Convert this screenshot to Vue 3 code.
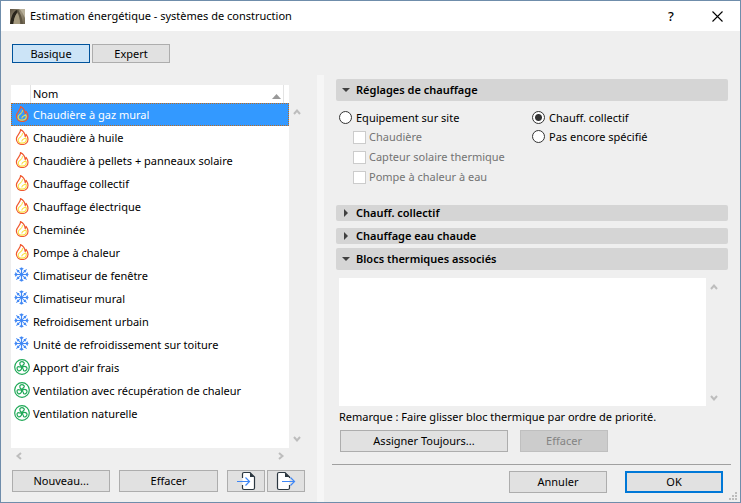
<script setup>
import { ref } from 'vue'

const systems = [
  { name: 'Chaudière à gaz mural', kind: 'flame' },
  { name: 'Chaudière à huile', kind: 'flame' },
  { name: 'Chaudière à pellets + panneaux solaire', kind: 'flame' },
  { name: 'Chauffage collectif', kind: 'flame' },
  { name: 'Chauffage électrique', kind: 'flame' },
  { name: 'Cheminée', kind: 'flame' },
  { name: 'Pompe à chaleur', kind: 'flame' },
  { name: 'Climatiseur de fenêtre', kind: 'snow' },
  { name: 'Climatiseur mural', kind: 'snow' },
  { name: 'Refroidisement urbain', kind: 'snow' },
  { name: 'Unité de refroidissement sur toiture', kind: 'snow' },
  { name: "Apport d'air frais", kind: 'fan' },
  { name: 'Ventilation avec récupération de chaleur', kind: 'fan' },
  { name: 'Ventilation naturelle', kind: 'fan' }
]
const equipment = ['Chaudière', 'Capteur solaire thermique', 'Pompe à chaleur à eau']
const straight = [0, 90, 180, 270]
const diagonal = [45, 135, 225, 315]
const blades = [0, 120, 240]

const selected = ref(0)
const mode = ref('basic')
const source = ref('district')
</script>

<template>
  <div class="window">
    <header class="titlebar">
      <svg class="logo" viewBox="0 0 15 15" aria-hidden="true">
        <defs>
          <linearGradient id="logo-bg" x1="0" y1="0" x2="1" y2="1">
            <stop offset="0" stop-color="#5a503f" />
            <stop offset="0.5" stop-color="#9b927c" />
            <stop offset="1" stop-color="#6a604b" />
          </linearGradient>
        </defs>
        <rect width="15" height="15" fill="url(#logo-bg)" />
        <path d="M9 0H15V9C13 5 12 2 9 0Z" fill="#b9b19b" />
        <path d="M0 15C1 8 3 2 7 1L9 2C6 4 4 9 3.500 15Z" fill="#2a251c" />
        <path d="M3.500 15C4 9 6 5 8 3.500C9 7 10 11 10 15Z" fill="#a59a7f" />
        <path d="M7 1C10 2 12 8 13 15H10.500C10 10 9 6 7.500 4Z" fill="#5f5643" />
      </svg>
      <h1 class="title">Estimation énergétique - systèmes de construction</h1>
      <button class="caption help" type="button" aria-label="Aide">?</button>
      <button class="caption" type="button" aria-label="Fermer">
        <svg width="11" height="11" viewBox="0 0 11 11"><path d="M.5 .5L10.5 10.5M10.5 .5L.5 10.5" fill="none" stroke="#000" stroke-width="1.1" /></svg>
      </button>
    </header>

    <nav class="tabs">
      <button type="button" class="btn tab" :class="{ on: mode === 'basic' }" @click="mode = 'basic'">Basique</button>
      <button type="button" class="btn tab" :class="{ on: mode === 'expert' }" @click="mode = 'expert'">Expert</button>
    </nav>

    <main class="panes">
      <section class="left">
        <div class="listbox">
          <div class="list">
            <table class="systems">
              <thead>
                <tr>
                  <th class="icon-head"></th>
                  <th class="name-head">
                    <span class="head-cell">Nom
                      <svg width="9" height="5" viewBox="0 0 9 5" aria-hidden="true"><path d="M0 5L4.500 0L9 5Z" fill="#999" /></svg>
                    </span>
                  </th>
                </tr>
              </thead>
              <tbody>
                <tr v-for="(s, i) in systems" :key="s.name" :class="{ selected: i === selected }" @click="selected = i">
                  <td class="icon-cell">
                    <svg v-if="s.kind === 'flame'" class="icon" viewBox="0 0 16 16" aria-hidden="true">
                      <path d="M6.500 .6C7.200 4 2.400 6 2.400 10.100C2.400 13.400 5 15.500 8.200 15.500C11.500 15.500 14 13.300 14 10.200C14 8.300 13.200 6.900 12.200 5.500C12.100 6.500 11.700 7.100 11.200 7.400C10.900 4.200 9.300 1.900 6.500 .6Z" fill="none" stroke="#f0592f" stroke-width="1.200" stroke-linejoin="round" />
                      <path d="M8.400 4.500C9.300 7.600 4.100 8.300 4.100 11C4.100 13 6 14.100 8.200 14.100C10.500 14.100 12.300 12.600 12.300 10.600C12.300 9.900 12.100 9.300 11.700 8.800C10.500 10 8 9.500 7.900 12" fill="none" stroke="#fbe03b" stroke-width="1.100" stroke-linecap="round" stroke-linejoin="round" />
                    </svg>
                    <svg v-else-if="s.kind === 'snow'" class="icon" viewBox="0 0 16 16" aria-hidden="true">
                      <g fill="none" stroke="#3f87f5" stroke-width="1.200">
                        <path v-for="a in straight" :key="a" :transform="`rotate(${a} 7.500 7.500)`" d="M7.500 7.500V.5M5.800 1.200L7.500 3L9.200 1.200" />
                        <path v-for="a in diagonal" :key="a" :transform="`rotate(${a} 7.500 7.500)`" d="M7.500 7.500V.3M6.200 2.300L7.500 3.600L8.800 2.300" stroke-width="1" />
                      </g>
                    </svg>
                    <svg v-else class="icon" viewBox="0 0 16 16" aria-hidden="true">
                      <g fill="none" stroke="#1ea856" stroke-width="1.200">
                        <circle cx="8" cy="8" r="7.300" />
                        <circle cx="8" cy="8" r=".8" />
                        <path v-for="a in blades" :key="a" :transform="`rotate(${a} 8 8)`" d="M7.400 7.300C5.700 6.200 5.300 3.900 6.600 3C8 2.200 10.400 3 10.300 4.500C10.200 5.500 8.800 5.600 8.600 7.300" />
                      </g>
                    </svg>
                  </td>
                  <td>{{ s.name }}</td>
                </tr>
              </tbody>
            </table>
          </div>
          <div class="vscroll">
            <svg class="chev" viewBox="0 0 8 8"><path d="M1 6L4 2.500L7 6" /></svg>
            <svg class="chev" viewBox="0 0 8 8"><path d="M1 2L4 5.500L7 2" /></svg>
          </div>
          <div class="hscroll">
            <svg class="chev" viewBox="0 0 8 8"><path d="M6 1L2.500 4L6 7" /></svg>
            <svg class="chev" viewBox="0 0 8 8"><path d="M2 1L5.500 4L2 7" /></svg>
          </div>
        </div>
        <div class="list-actions">
          <button type="button" class="btn">Nouveau...</button>
          <button type="button" class="btn">Effacer</button>
          <span class="io">
            <button type="button" class="btn" aria-label="Importer">
              <svg width="20" height="20" viewBox="0 0 20 20">
                <path d="M6.500 7V3Q6.500 1.500 8 1.500H14L18.500 6V17Q18.500 18.500 17 18.500H8Q6.500 18.500 6.500 17V14" fill="#fff" stroke="#2b3740" stroke-width="1.200" />
                <path d="M14 1.500V6H18.500Z" fill="#2b3740" />
                <path d="M1 10.500H13M9.500 6.500L13.500 10.500L9.500 14.500" fill="none" stroke="#3f87f5" stroke-width="1.200" />
              </svg>
            </button>
            <button type="button" class="btn" aria-label="Exporter">
              <svg width="20" height="20" viewBox="0 0 20 20">
                <path d="M13.500 7V6L9 1.500H3Q1.500 1.500 1.500 3V17Q1.500 18.500 3 18.500H12Q13.500 18.500 13.500 17V14" fill="#fff" stroke="#2b3740" stroke-width="1.200" />
                <path d="M9 1.500V6H13.500Z" fill="#2b3740" />
                <path d="M6 10.500H18M14.500 6.500L18.500 10.500L14.500 14.500" fill="none" stroke="#3f87f5" stroke-width="1.200" />
              </svg>
            </button>
          </span>
        </div>
      </section>

      <div class="splitter"></div>

      <section class="right">
        <h2 class="bar tall"><svg class="tri" viewBox="0 0 8 8"><path d="M0 2H8L4 6Z" /></svg>Réglages de chauffage</h2>
        <div class="heating">
          <div class="col">
            <label class="opt"><input v-model="source" type="radio" name="source" value="site">Equipement sur site</label>
            <label v-for="e in equipment" :key="e" class="opt sub"><input type="checkbox" disabled>{{ e }}</label>
          </div>
          <div class="col">
            <label class="opt"><input v-model="source" type="radio" name="source" value="district">Chauff. collectif</label>
            <label class="opt"><input v-model="source" type="radio" name="source" value="none">Pas encore spécifié</label>
          </div>
        </div>
        <h2 class="bar"><svg class="tri" viewBox="0 0 8 8"><path d="M2 0V8L6 4Z" /></svg>Chauff. collectif</h2>
        <h2 class="bar second"><svg class="tri" viewBox="0 0 8 8"><path d="M2 0V8L6 4Z" /></svg>Chauffage eau chaude</h2>
        <h2 class="bar tall third"><svg class="tri" viewBox="0 0 8 8"><path d="M0 2H8L4 6Z" /></svg>Blocs thermiques associés</h2>
        <div class="blocks">
          <div class="blocks-list"></div>
          <div class="vscroll">
            <svg class="chev" viewBox="0 0 8 8"><path d="M1 6L4 2.500L7 6" /></svg>
            <svg class="chev" viewBox="0 0 8 8"><path d="M1 2L4 5.500L7 2" /></svg>
          </div>
        </div>
        <p class="note">Remarque : Faire glisser bloc thermique par ordre de priorité.</p>
        <div class="assign">
          <button type="button" class="btn wide">Assigner Toujours...</button>
          <button type="button" class="btn clear" disabled>Effacer</button>
        </div>
        <footer class="footer">
          <button type="button" class="btn">Annuler</button>
          <button type="button" class="btn ok">OK</button>
        </footer>
      </section>
    </main>
    <svg class="grip" viewBox="0 0 8 8" aria-hidden="true">
      <path d="M6 0h2v2H6zM3 3h2v2H3zM6 3h2v2H6zM0 6h2v2H0zM3 6h2v2H3zM6 6h2v2H6z" fill="#bdbdbd" />
    </svg>
  </div>
</template>

<style>
body {
  margin: 0;
}
</style>

<style scoped>
.window {
  position: relative;
  display: flex;
  flex-direction: column;
  box-sizing: border-box;
  min-height: 100vh;
  border: 1px solid #6f8dab;
  background: #efefef;
  color: #000;
  font: 11px/16px "Noto Sans", "Open Sans", sans-serif;
}
.titlebar {
  display: flex;
  align-items: center;
  height: 30px;
  padding-left: 9px;
  background: #fff;
}
.logo {
  width: 15px;
  height: 15px;
}
.title {
  flex: 1;
  margin: 0 0 0 5px;
  font-size: 11px;
  font-weight: 400;
}
.caption {
  display: flex;
  align-items: center;
  justify-content: center;
  width: 46px;
  height: 30px;
  padding: 0;
  border: 0;
  background: none;
  color: #000;
  font: inherit;
}
.help {
  font-size: 13px;
  font-weight: 500;
}
.tabs {
  display: flex;
  gap: 2px;
  padding: 13px 11px 12px;
}
.btn {
  display: flex;
  align-items: center;
  justify-content: center;
  box-sizing: border-box;
  height: 22px;
  padding: 0;
  border: 1px solid #adadad;
  border-radius: 0;
  background: #e1e1e1;
  color: #000;
  font: inherit;
}
.tab {
  width: 78px;
  height: 19px;
}
.tab.on {
  border-color: #00539c;
  background: #cce4f7;
}
.panes {
  flex: 1;
  display: grid;
  grid-template-columns: minmax(0, 316fr) 7px minmax(0, 416fr);
}
.left {
  display: flex;
  flex-direction: column;
  padding: 10px 12px 10px 10px;
}
.listbox {
  flex: 1;
  display: grid;
  grid-template-columns: minmax(0, 1fr) 16px;
  grid-template-rows: minmax(0, 1fr) 15px;
}
.list {
  background: #fff;
}
.systems {
  width: 100%;
  border-collapse: separate;
  border-spacing: 0;
  table-layout: fixed;
}
.systems th {
  height: 18px;
  padding: 0;
  font-weight: 400;
  text-align: left;
}
.icon-head {
  width: 19px;
}
.systems .name-head {
  padding-right: 5px;
}
.head-cell {
  display: flex;
  align-items: center;
  justify-content: space-between;
  height: 18px;
  padding: 0 2px;
  border: solid #e3e3e3;
  border-width: 0 1px;
}
.head-cell svg {
  align-self: flex-end;
  margin-bottom: 4px;
}
.systems td {
  box-sizing: border-box;
  height: 23px;
  padding: 0 0 0 3px;
  white-space: nowrap;
}
.systems .icon-cell {
  padding-bottom: 2px;
}
.icon {
  display: block;
  width: 16px;
  height: 16px;
}
.selected {
  outline: 1px dotted #c06a1c;
  outline-offset: -1px;
  background: #3399ff;
  color: #fff;
}
.vscroll {
  display: flex;
  flex-direction: column;
  justify-content: space-between;
  align-items: center;
}
.listbox .vscroll {
  padding: 23px 0 5px;
}
.hscroll {
  display: flex;
  align-items: center;
  justify-content: space-between;
  padding: 0 4px;
}
.chev {
  width: 8px;
  height: 8px;
  fill: none;
  stroke: #bdbdbd;
  stroke-width: 2;
}
.list-actions {
  display: grid;
  grid-template-columns: 98fr 98fr 78fr;
  gap: 9px;
  padding: 7px 0 0 1px;
}
.io {
  display: grid;
  grid-template-columns: 1fr 1fr;
  gap: 2px;
}
.splitter {
  background: #f6f6f6;
}
.right {
  display: flex;
  flex-direction: column;
  padding: 4px 12px 9px;
}
.bar {
  display: flex;
  align-items: center;
  gap: 6px;
  height: 16px;
  margin: 0;
  padding-left: 6px;
  border-radius: 2px;
  background: #d5d5d5;
  font-size: 11px;
  font-weight: 600;
}
.tall {
  height: 22px;
}
.second {
  margin-top: 7px;
}
.third {
  margin-top: 4px;
}
.tri {
  width: 8px;
  height: 8px;
  fill: #404040;
}
.heating {
  display: grid;
  grid-template-columns: 193fr 196fr;
  padding: 7px 0 18px 3px;
}
.col {
  display: flex;
  flex-direction: column;
}
.opt {
  display: flex;
  align-items: center;
  gap: 4px;
  height: 19px;
}
.sub {
  height: 20px;
  gap: 3px;
  padding-left: 14px;
  color: #737373;
}
.opt input {
  appearance: none;
  box-sizing: border-box;
  width: 13px;
  height: 13px;
  margin: 0;
  border: 1px solid #333;
  border-radius: 50%;
  background: #fff;
}
.opt input:checked {
  background: radial-gradient(circle, #333 3px, #fff 4px);
}
.opt input[type="checkbox"] {
  border-color: #ccc;
  border-radius: 0;
}
.blocks {
  flex: 1;
  display: grid;
  grid-template-columns: minmax(0, 1fr) 16px;
  min-height: 80px;
  padding: 8px 6px 0 3px;
}
.blocks-list {
  background: #fff;
}
.blocks .vscroll {
  padding: 5px 0 4px;
}
.note {
  margin: 3px 0 5px 3px;
}
.assign {
  display: flex;
  gap: 12px;
  padding: 0 0 12px 4px;
}
.wide {
  width: 168px;
}
.clear {
  width: 88px;
}
.btn:disabled {
  border-color: #bfbfbf;
  background: #ccc;
  color: #838383;
}
.footer {
  display: flex;
  justify-content: flex-end;
  gap: 18px;
  margin: 0 -3px 0 -4px;
  padding: 6px 8px 0 0;
  border-top: 1px solid #a0a0a0;
}
.footer .btn {
  width: 98px;
}
.footer .ok {
  border: 2px solid #0078d7;
}
.grip {
  position: absolute;
  right: 3px;
  bottom: 2px;
  width: 8px;
  height: 8px;
}
</style>
